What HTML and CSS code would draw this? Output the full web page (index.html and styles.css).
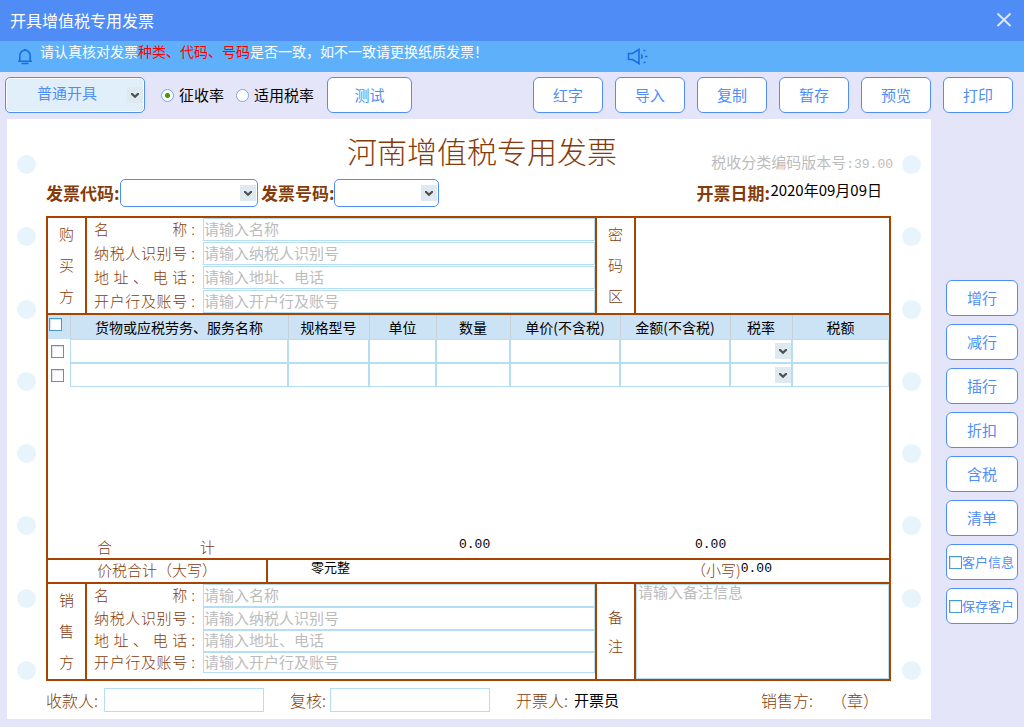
FILE: index.html
```html
<!DOCTYPE html>
<html lang="zh-CN">
<head>
<meta charset="utf-8">
<meta name="viewport" content="width=device-width, initial-scale=1">
<title>开具增值税专用发票</title>
<link rel="stylesheet" href="styles.css">
</head>
<body>
<svg class="defs" aria-hidden="true">
  <symbol id="chevron" viewBox="0 0 16 16"><rect width="16" height="16" fill="#dfe9f0"/><path d="M4 6v1.600l4 3.600 4-3.600V6h-1.600L8 8.200 5.600 6z" fill="#505050"/></symbol>
</svg>

<header class="titlebar">
  <h1>开具增值税专用发票</h1>
  <button class="close" type="button" aria-label="关闭">
    <svg viewBox="0 0 16 16"><path d="M1.500 1.500l13 12.500M14.500 1.500l-13 12.500"/></svg>
  </button>
</header>

<div class="notice">
  <svg class="bell" viewBox="0 0 14 17"><path d="M1.800 13V7.500a5.200 5.200 0 0 1 10.400 0V13M0 13.300h14M3.500 15.500h7M5.500 1.700h3"/></svg>
  <p>请认真核对发票<em>种类、代码、号码</em>是否一致，如不一致请更换纸质发票！</p>
  <svg class="horn" viewBox="0 0 21 17"><path d="M1.500 5.500h4l6.500-4v14l-6.500-4h-4zM14 6.500c1.500.500 1.500 3.500 0 4"/><path d="M16.500 2.500h2M18 8.500h2.500M16.500 14.500h2"/></svg>
</div>

<div class="toolbar">
  <span class="select select-mode">
    <select aria-label="开具方式"><option>普通开具</option></select>
    <svg><use href="#chevron"/></svg>
  </span>
  <div class="rates">
    <label><input class="radio" type="radio" name="rate" checked>征收率</label>
    <label><input class="radio" type="radio" name="rate">适用税率</label>
  </div>
  <button class="btn btn-test" type="button">测试</button>
  <div class="actions">
    <button class="btn" type="button">红字</button>
    <button class="btn" type="button">导入</button>
    <button class="btn" type="button">复制</button>
    <button class="btn" type="button">暂存</button>
    <button class="btn" type="button">预览</button>
    <button class="btn" type="button">打印</button>
  </div>
</div>

<main class="workspace">
  <section class="paper">
    <div class="holes"><i></i><i></i><i></i><i></i><i></i><i></i><i></i><i></i></div>
    <div class="invoice">
      <div class="heading">
        <h2>河南增值税专用发票</h2>
        <p class="version">税收分类编码版本号<span class="num">:39.00</span></p>
      </div>
      <div class="codes">
        <label for="code">发票代码:</label>
        <span class="select select-code"><select id="code"><option></option></select><svg><use href="#chevron"/></svg></span>
        <label for="number">发票号码:</label>
        <span class="select select-number"><select id="number"><option></option></select><svg><use href="#chevron"/></svg></span>
        <div class="date"><b>开票日期:</b><time datetime="2020-09-09">2020年09月09日</time></div>
      </div>

      <div class="frame">
        <div class="party">
          <div class="side"><span>购</span><span>买</span><span>方</span></div>
          <div class="fields">
            <label for="b1"><span>名称</span>:</label><input id="b1" type="text" placeholder="请输入名称">
            <label for="b2"><span>纳税人识别号</span>:</label><input id="b2" type="text" placeholder="请输入纳税人识别号">
            <label for="b3"><span>地址、电话</span>:</label><input id="b3" type="text" placeholder="请输入地址、电话">
            <label for="b4"><span>开户行及账号</span>:</label><input id="b4" type="text" placeholder="请输入开户行及账号">
          </div>
          <div class="side"><span>密</span><span>码</span><span>区</span></div>
          <div class="cipher"></div>
        </div>

        <div class="items">
          <table>
            <colgroup><col class="c-check"><col><col class="c-spec"><col class="c-unit"><col class="c-qty"><col class="c-money"><col class="c-money"><col class="c-rate"><col class="c-tax"></colgroup>
            <thead>
              <tr><th><input class="check" type="checkbox" aria-label="全选"></th><th>货物或应税劳务、服务名称</th><th>规格型号</th><th>单位</th><th>数量</th><th>单价(不含税)</th><th>金额(不含税)</th><th>税率</th><th>税额</th></tr>
            </thead>
            <tbody>
              <tr>
                <td class="pick"><input class="check" type="checkbox" aria-label="选择第1行"></td>
                <td><input type="text" aria-label="名称"></td><td><input type="text" aria-label="规格型号"></td><td><input type="text" aria-label="单位"></td><td><input type="text" aria-label="数量"></td><td><input type="text" aria-label="单价"></td><td><input type="text" aria-label="金额"></td>
                <td><span class="select select-rate"><select aria-label="税率"><option></option></select><svg><use href="#chevron"/></svg></span></td>
                <td><input type="text" aria-label="税额"></td>
              </tr>
              <tr>
                <td class="pick"><input class="check" type="checkbox" aria-label="选择第2行"></td>
                <td><input type="text" aria-label="名称"></td><td><input type="text" aria-label="规格型号"></td><td><input type="text" aria-label="单位"></td><td><input type="text" aria-label="数量"></td><td><input type="text" aria-label="单价"></td><td><input type="text" aria-label="金额"></td>
                <td><span class="select select-rate"><select aria-label="税率"><option></option></select><svg><use href="#chevron"/></svg></span></td>
                <td><input type="text" aria-label="税额"></td>
              </tr>
            </tbody>
          </table>
          <div class="totals">
            <span class="sum-label">合计</span>
            <span class="num">0.00</span>
            <span class="num">0.00</span>
          </div>
        </div>

        <div class="amount">
          <span class="amount-label">价税合计（大写）</span>
          <span class="words">零元整</span>
          <span class="figures">（小写)<span class="num">0.00</span></span>
        </div>

        <div class="party seller">
          <div class="side"><span>销</span><span>售</span><span>方</span></div>
          <div class="fields">
            <label for="s1"><span>名称</span>:</label><input id="s1" type="text" placeholder="请输入名称">
            <label for="s2"><span>纳税人识别号</span>:</label><input id="s2" type="text" placeholder="请输入纳税人识别号">
            <label for="s3"><span>地址、电话</span>:</label><input id="s3" type="text" placeholder="请输入地址、电话">
            <label for="s4"><span>开户行及账号</span>:</label><input id="s4" type="text" placeholder="请输入开户行及账号">
          </div>
          <div class="side side-note"><span>备</span><span>注</span></div>
          <textarea aria-label="备注" placeholder="请输入备注信息"></textarea>
        </div>
      </div>

      <div class="signers">
        <label for="payee">收款人:</label><input id="payee" type="text">
        <label class="review" for="review">复核:</label><input id="review" type="text">
        <span class="drawer">开票人:</span><span class="drawer-name">开票员</span>
        <span class="stamp"><span>销售方:</span><span>（章）</span></span>
      </div>
    </div>
    <div class="holes"><i></i><i></i><i></i><i></i><i></i><i></i><i></i><i></i></div>
  </section>

  <aside class="rowtools">
    <button class="btn" type="button">增行</button>
    <button class="btn" type="button">减行</button>
    <button class="btn" type="button">插行</button>
    <button class="btn" type="button">折扣</button>
    <button class="btn" type="button">含税</button>
    <button class="btn" type="button">清单</button>
    <label class="btn btn-check"><input class="check" type="checkbox">客户信息</label>
    <label class="btn btn-check"><input class="check" type="checkbox">保存客户</label>
  </aside>
</main>
</body>
</html>
```
FILE: styles.css
```css
:root {
  --blue: #4f8ef7;
  --rust: #a84300;
  --brown: #843c0c;
  --line: #b5def5;
  --hint: #bcbcbc;
}

* { box-sizing: border-box; }

body {
  margin: 0;
  min-height: 100vh;
  display: flex;
  flex-direction: column;
  background: #e5e5fa;
  color: #000;
  font: 400 15px/20px "Noto Sans CJK SC", "Liberation Sans", sans-serif;
}

h1, h2, p { margin: 0; font-weight: inherit; }
button, input, select, textarea { font: inherit; color: inherit; margin: 0; }
.defs { position: absolute; width: 0; height: 0; }
.num { font: 13px/20px "Liberation Mono", monospace; }

/* Title and notice bars */
.titlebar {
  display: flex;
  align-items: center;
  justify-content: space-between;
  height: 41px;
  padding: 0 12px 2px 10px;
  background: #4f8cf5;
  color: #fff;
}
.titlebar h1 { font-size: 16px; line-height: 18px; }
.close { padding: 0; border: 0; background: none; height: 16px; }
.close svg { display: block; width: 16px; height: 16px; fill: none; stroke: #dbe7fd; stroke-width: 2; }

.notice {
  display: flex;
  height: 31px;
  padding: 0 18px;
  background: #5eb0fb;
  color: #fff;
  font-size: 14px;
}
.notice em { font-style: normal; color: #f00; }
.notice svg { flex: none; margin-top: 7px; fill: none; stroke: #1a6ee0; stroke-width: 1.6; }
.bell { width: 14px; height: 17px; margin-right: 8px; }
.notice p { width: 587px; }
.horn { width: 21px; height: 17px; }

/* Buttons and selects */
.btn {
  width: 70px;
  height: 36px;
  padding: 0;
  border: 1px solid var(--blue);
  border-radius: 6px;
  background: #fff;
  color: var(--blue);
}
.select { display: grid; align-items: center; }
.select > * { grid-area: 1 / 1; }
.select select {
  width: 100%;
  height: 28px;
  border: 1px solid var(--blue);
  border-radius: 5px;
  background: #fff;
  appearance: none;
}
.select svg { width: 16px; height: 16px; justify-self: end; margin-right: 2px; pointer-events: none; }

.toolbar { display: flex; align-items: center; padding: 5px 11px 6px 5px; }
.select-mode { width: 140px; }
.select-mode select {
  height: 36px;
  padding: 0 32px 4px 16px;
  background: #e1effa;
  box-shadow: inset 0 0 0 1px #fff;
  color: var(--blue);
  text-align-last: center;
}
.rates { display: flex; gap: 12px; margin: 0 13px 0 16px; }
.rates label { display: flex; align-items: center; gap: 5px; }
.radio {
  appearance: none;
  width: 13px;
  height: 13px;
  border: 1px solid #7fa9c9;
  border-radius: 50%;
  background: #fff;
}
.radio:checked { background: radial-gradient(circle, #3f9a00 0 2px, #fff 3px); }
.btn-test { width: 85px; }
.actions { display: flex; gap: 12px; margin-left: auto; }

.check {
  appearance: none;
  flex: none;
  display: block;
  width: 13px;
  height: 13px;
  border: 1px solid #479bce;
  background: #fff;
  box-shadow: inset 1px 1px 1px #dcdfe6;
}

/* Workspace */
.workspace { flex: 1; display: flex; padding: 0 6px 8px 7px; }
.paper { flex: 1; display: grid; grid-template-columns: 39px 1fr 40px; background: #fff; }
.holes {
  display: flex;
  flex-direction: column;
  align-items: center;
  justify-content: space-between;
  padding: 36px 0 39px;
}
.holes i { width: 19px; height: 19px; border-radius: 50%; background: #e8f4fb; }
.invoice { display: flex; flex-direction: column; min-width: 0; }

.heading { display: grid; grid-template-columns: 301px 1fr auto; height: 60px; }
.heading h2 { grid-column: 2; padding-top: 11px; font-size: 30px; font-weight: 300; line-height: 40px; color: var(--brown); white-space: nowrap; }
.version { padding-top: 33px; margin-right: -2px; color: var(--hint); white-space: nowrap; }

.codes { display: flex; align-items: center; color: var(--brown); margin-bottom: 9px; }
.codes label, .date b { flex: none; width: 73px; font-weight: 700; font-size: 17px; white-space: nowrap; }
.select-code { width: 138px; margin: 0 3px 0 1px; }
.select-number { width: 105px; }
.date { display: flex; gap: 1px; margin: 0 9px 0 auto; }
.date time { color: #000; line-height: 14px; }

/* Invoice frame */
.frame { flex: 1; display: flex; flex-direction: column; border: 2px solid var(--rust); }
.party { display: grid; grid-template-columns: 39px 1fr 39px 253px; color: var(--brown); }
.side { display: flex; flex-direction: column; align-items: center; justify-content: space-around; padding: 1px 0 2px; border-right: 2px solid var(--rust); font-weight: 300; }
.side-note { padding: 18px 0; }
.fields { display: grid; grid-template-columns: 108px 1fr; gap: 1px 8px; border-right: 2px solid var(--rust); }
.fields label { display: flex; align-items: center; gap: 4px; padding: 0 0 2px 7px; font-weight: 300; }
.fields label span { flex: 1; text-align-last: justify; }
.fields input { height: 23px; }
input[type="text"] { width: 100%; min-width: 0; padding: 0 0 2px; border: 1px solid var(--line); border-radius: 0; background: #fff; color: #000; }
::placeholder { color: var(--hint); opacity: 1; }

.items { flex: 1; display: flex; flex-direction: column; justify-content: space-between; border-top: 2px solid var(--rust); border-bottom: 2px solid var(--rust); }
table { width: 100%; table-layout: fixed; border-collapse: collapse; font-size: 14px; }
.c-check { width: 22px; }
.c-spec { width: 81px; }
.c-unit { width: 67px; }
.c-qty { width: 74px; }
.c-money { width: 110px; }
.c-rate { width: 62px; }
.c-tax { width: 97px; }
th { height: 24px; padding: 0; background: #cce3f6; font-weight: 400; box-shadow: inset 1px 0 #c9d0d8; white-space: nowrap; }
th:first-child { padding: 3px 1px; vertical-align: top; box-shadow: none; }
td { padding: 0; height: 24px; }
td.pick { padding-left: 3px; }
td input[type="text"] { display: block; height: 24px; }
.select-rate select { height: 24px; border-color: var(--line); border-radius: 0; }
.select-rate svg { margin-right: 1px; }

.totals { display: grid; grid-template-columns: 118px 1fr 236px; padding: 0 162px 1px 49px; align-items: start; }
.sum-label { display: block; text-align-last: justify; color: var(--brown); font-weight: 300; }
.totals .num { justify-self: end; width: 32px; line-height: 16px; }

.amount { display: grid; grid-template-columns: 220px 1fr 198px; height: 22px; }
.amount-label { padding-left: 49px; border-right: 2px solid var(--rust); color: var(--brown); font-weight: 300; white-space: nowrap; }
.words { padding-left: 43px; font-size: 13px; line-height: 14px; }
.figures { display: flex; color: var(--brown); font-weight: 300; }
.figures .num { color: #000; line-height: 18px; }

.seller { border-top: 2px solid var(--rust); }
.seller .fields { grid-template-rows: 23px 23px 22px 21px; gap: 0 8px; padding-bottom: 6px; }
.seller input { height: auto; }
.seller textarea { display: block; height: 95px; padding: 0 1px; border: 1px solid var(--line); background: #fff; resize: none; line-height: 14px; }

/* Signature line */
.signers { display: flex; align-items: center; padding: 7px 12px 7px 0; color: var(--brown); font-size: 16px; font-weight: 300; white-space: nowrap; }
.signers input[type="text"] { width: 160px; height: 24px; margin-left: 4px; }
.signers label { width: 54px; }
.signers .review { width: 36px; margin-left: 26px; }
.drawer { margin-left: 26px; }
.drawer-name { margin-left: 6px; color: #000; font-size: 15px; font-weight: 400; line-height: 16px; }
.stamp { display: flex; gap: 18px; margin-left: auto; }

/* Row tools */
.rowtools { display: flex; flex-direction: column; gap: 8px; padding: 161px 0 0 15px; }
.rowtools .btn { width: 72px; }
.btn-check { display: flex; align-items: center; padding-left: 2px; font-size: 13px; white-space: nowrap; }
```
